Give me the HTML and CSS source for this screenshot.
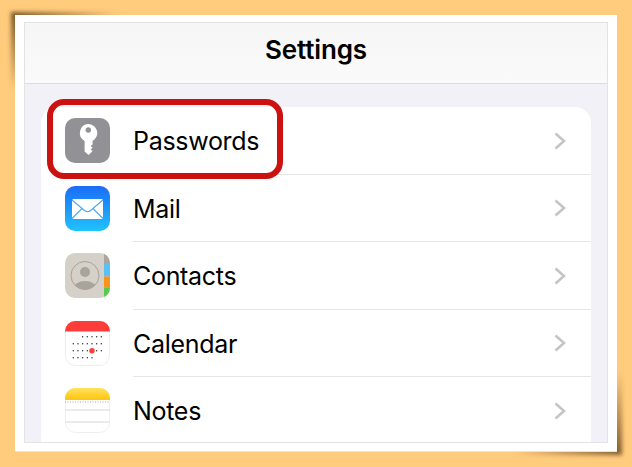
FILE: index.html
```html
<!DOCTYPE html>
<html lang="en">
<head>
<meta charset="utf-8">
<title>Settings</title>
<link rel="stylesheet" href="styles.css">
</head>
<body>
<main class="sheet">
  <div class="screen">
    <header class="nav">Settings</header>
    <section class="content">
      <ul class="list">
        <li class="row">
          <svg class="icon" viewBox="0 0 45 45"><rect width="45" height="45" rx="10" fill="#929296"/><path fill-rule="evenodd" fill="#fff" d="M23.300 6a9 9 0 0 1 4.300 16.900v3.600l-2 1.600 2 1.700-2 1.600 2 1.700-4 3.900-4-3.500V22.900A9 9 0 0 1 23.300 6zm0 3.300a2.700 2.700 0 1 0 0 5.400 2.700 2.700 0 0 0 0-5.400z"/></svg>
          <span class="label">Passwords</span>
          <svg class="chev" viewBox="0 0 12 18"><path d="M1.500 1.500 10 9l-8.500 7.500" /></svg>
        </li>
        <li class="row">
          <svg class="icon" viewBox="0 0 45 45"><defs><linearGradient id="mail" x1="0" y1="0" x2="0" y2="1"><stop offset="0" stop-color="#1b6cf7"/><stop offset="1" stop-color="#1fc3fd"/></linearGradient></defs><rect width="45" height="45" rx="10" fill="url(#mail)"/><rect x="7" y="13" width="31" height="20" rx="1.500" fill="#fff"/><path d="M7 14 19.500 24.500q3 2.500 6 0L38 14M7 32.500 17 22.500M38 32.500 28 22.500" fill="none" stroke="#4aa6f8" stroke-width="1.100"/></svg>
          <span class="label">Mail</span>
          <svg class="chev" viewBox="0 0 12 18"><path d="M1.500 1.500 10 9l-8.500 7.500" /></svg>
        </li>
        <li class="row">
          <svg class="icon" viewBox="0 0 45 45"><defs><clipPath id="cc"><rect width="45" height="45" rx="10"/></clipPath><clipPath id="cp"><circle cx="20" cy="22.500" r="14"/></clipPath></defs><g clip-path="url(#cc)"><rect width="45" height="45" fill="#d5d1c8"/><rect x="39" width="6" height="11" fill="#a9a69f"/><rect x="39" y="11" width="6" height="12.500" fill="#5dc0f5"/><rect x="39" y="23.500" width="6" height="11" fill="#f5951f"/><rect x="39" y="34.500" width="6" height="11" fill="#5bc84f"/></g><g clip-path="url(#cp)"><circle cx="20" cy="19" r="5" fill="#a8a39b"/><ellipse cx="20" cy="36" rx="11.500" ry="8" fill="#a8a39b"/></g><circle cx="20" cy="22.500" r="14" fill="none" stroke="#a8a39b" stroke-width="1"/></svg>
          <span class="label">Contacts</span>
          <svg class="chev" viewBox="0 0 12 18"><path d="M1.500 1.500 10 9l-8.500 7.500" /></svg>
        </li>
        <li class="row">
          <svg class="icon" viewBox="0 0 45 45"><defs><clipPath id="cal"><rect width="45" height="45" rx="10"/></clipPath></defs><rect x=".5" y=".5" width="44" height="44" rx="10" fill="#fff" stroke="#ececee"/><rect width="45" height="10.500" fill="#fc3d39" clip-path="url(#cal)"/><path d="M17.640 15.700H37M8.300 22.700H37M8.300 29.700H37M8.300 36.700H28" fill="none" stroke="#333" stroke-width="1.500" stroke-linecap="round" stroke-dasharray="0 4.670"/><circle cx="27" cy="29.700" r="2.700" fill="#fc3d39"/></svg>
          <span class="label">Calendar</span>
          <svg class="chev" viewBox="0 0 12 18"><path d="M1.500 1.500 10 9l-8.500 7.500" /></svg>
        </li>
        <li class="row">
          <svg class="icon" viewBox="0 0 45 45"><defs><linearGradient id="note" x1="0" y1="0" x2="0" y2="1"><stop offset="0" stop-color="#ffe25e"/><stop offset="1" stop-color="#fdc50c"/></linearGradient></defs><rect x=".5" y=".5" width="44" height="44" rx="10" fill="#fff" stroke="#efeff0"/><path d="M0 12V10A10 10 0 0 1 10 0H35A10 10 0 0 1 45 10V12Z" fill="url(#note)"/><path d="M0 14h45" stroke="#a9a9a9" stroke-width="1" stroke-dasharray="1 1.500"/><path d="M0 22h45" stroke="#d8d8d8" stroke-width="1"/><path d="M0 34h45" stroke="#e4e4e4" stroke-width="1.500"/></svg>
          <span class="label">Notes</span>
          <svg class="chev" viewBox="0 0 12 18"><path d="M1.500 1.500 10 9l-8.500 7.500" /></svg>
        </li>
      </ul>
    </section>
    <div class="highlight"></div>
  </div>
</main>
</body>
</html>
```

FILE: styles.css
```css
* { box-sizing: border-box; }

html, body { margin: 0; height: 100%; }

body {
  background: #ffcb7d;
  padding: 15px;
  font-family: Inter, "Liberation Sans", sans-serif;
  color: #000;
  overflow: hidden;
}

.sheet {
  position: relative;
  width: 602px;
  height: 437px;
  background: #fff;
  padding: 7px 9px 8px 9px;
  border-bottom: 1px solid #e8e4dc;
}

.sheet::before,
.sheet::after {
  content: "";
  position: absolute;
  z-index: -1;
  filter: blur(2px);
}

.sheet::before {
  left: -4px;
  top: -3px;
  width: 110px;
  height: 80px;
  background: linear-gradient(to bottom right, rgba(90, 60, 20, 0.85) 0, rgba(90, 60, 20, 0) 50%);
}

.sheet::after {
  right: -5px;
  bottom: -4px;
  width: 110px;
  height: 85px;
  background: linear-gradient(to top left, rgba(90, 60, 20, 0.8) 0, rgba(90, 60, 20, 0) 50%);
}

.screen {
  position: relative;
  height: 421px;
  background: #f2f1f7;
  border: 1px solid #e3e3e5;
  display: flex;
  flex-direction: column;
}

.nav {
  height: 61px;
  flex: none;
  background: linear-gradient(#f6f6f6, #fafafa);
  border-bottom: 1px solid #dcdcdf;
  display: flex;
  align-items: center;
  justify-content: center;
  font-size: 26px;
  font-weight: 600;
  letter-spacing: -0.15px;
  padding-bottom: 7px;
}

.content {
  flex: 1;
  padding: 23px 16px 0 16px;
  min-height: 0;
}

.list {
  list-style: none;
  margin: 0;
  padding: 0;
  background: #fff;
  border-radius: 16px 16px 0 0;
  height: 100%;
  overflow: hidden;
}

.row {
  height: 67.500px;
  padding-left: 24px;
  padding-right: 25px;
  display: flex;
  align-items: center;
  position: relative;
}

.row + .row::before {
  content: "";
  position: absolute;
  left: 92px;
  right: 0;
  top: -1px;
  height: 1px;
  background: #e6e6e9;
}

.icon {
  width: 45px;
  height: 45px;
  flex: none;
}

.label {
  margin-left: 23px;
  flex: 1;
  font-size: 25px;
  letter-spacing: -0.3px;
  padding-top: 1px;
}

.chev {
  width: 12px;
  height: 18px;
  flex: none;
  fill: none;
  stroke: #c4c4c7;
  stroke-width: 2.500px;
}

.highlight {
  position: absolute;
  left: 22px;
  top: 76px;
  width: 236px;
  height: 80px;
  border: 6px solid #cc1111;
  border-radius: 17px;
}
```
